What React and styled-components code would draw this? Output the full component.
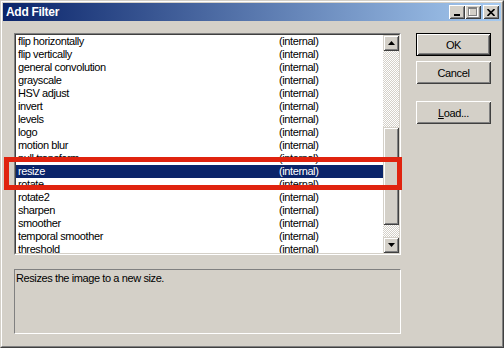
import React from 'react'
import styled, { createGlobalStyle } from 'styled-components'

const GlobalStyle = createGlobalStyle`
  html, body {
    margin: 0;
    padding: 0;
    background: #d4d0c8;
  }
  * {
    box-sizing: border-box;
  }
`

const face = '#d4d0c8'
const font = `"Liberation Sans", Arial, sans-serif`

const Frame = styled.div`
  position: relative;
  width: 504px;
  height: 348px;
  border: 1px solid;
  border-color: ${face} #404040 #404040 ${face};
  font-family: ${font};
`
const FrameInner = styled.div`
  height: 100%;
  border: 1px solid;
  border-color: #fff #808080 #808080 #fff;
  padding: 1px;
  background: ${face};
  display: flex;
  flex-direction: column;
`
const TitleBar = styled.div`
  height: 18px;
  display: flex;
  align-items: center;
  padding: 0 2px 0 3px;
  background: linear-gradient(to right, #0a246a, #a6caf0);
`
const Title = styled.div`
  flex: 1;
  color: #fff;
  font-weight: bold;
  font-size: 12px;
  letter-spacing: -0.3px;
`
const CaptionButton = styled.div`
  width: 16px;
  height: 14px;
  margin-left: ${(p) => p.$gap || 0}px;
  display: flex;
  align-items: center;
  justify-content: center;
  background: ${face};
  box-shadow: inset 1px 1px #fff, inset -1px -1px #404040,
    inset 2px 2px ${face}, inset -2px -2px #808080;
`
const Body = styled.div`
  flex: 1;
  display: flex;
  gap: 15px;
  padding: 12px 10px 11px 11px;
`
const LeftColumn = styled.div`
  width: 387px;
  display: flex;
  flex-direction: column;
  gap: 14px;
`
const SunkenOuter = styled.div`
  height: 222px;
  border: 1px solid;
  border-color: #808080 #fff #fff #808080;
`
const SunkenInner = styled.div`
  height: 100%;
  border: 1px solid;
  border-color: #404040 ${face} ${face} #404040;
  background: #fff;
  display: flex;
`
const Rows = styled.div`
  flex: 1;
  overflow: hidden;
`
const Row = styled.div`
  height: 13px;
  display: flex;
  align-items: center;
  font-size: 11px;
  letter-spacing: -0.4px;
  line-height: 13px;
  white-space: nowrap;
  color: ${(p) => (p.$selected ? '#fff' : '#000')};
  background: ${(p) => (p.$selected ? '#0a246a' : 'transparent')};
`
const NameCell = styled.span`
  width: 263px;
  padding-left: 2px;
`
const SourceCell = styled.span`
  flex: 1;
`
const Scrollbar = styled.div`
  width: 16px;
  display: flex;
  flex-direction: column;
`
const ArrowButton = styled.div`
  height: 16px;
  display: flex;
  align-items: center;
  justify-content: center;
  background: ${face};
  box-shadow: inset 1px 1px ${face}, inset -1px -1px #404040,
    inset 2px 2px #fff, inset -2px -2px #808080;
`
const Track = styled.div`
  flex: 1;
  background-color: #fff;
  background-image: repeating-conic-gradient(${face} 0 25%, #fff 0 50%);
  background-size: 2px 2px;
`
const Thumb = styled.div`
  margin-top: ${(p) => p.$offset}px;
  height: ${(p) => p.$size}px;
  background: ${face};
  box-shadow: inset 1px 1px ${face}, inset -1px -1px #404040,
    inset 2px 2px #fff, inset -2px -2px #808080;
`
const Description = styled.div`
  height: 65px;
  border: 1px solid;
  border-color: #808080 #fff #fff #808080;
  padding: 2px 1px;
  font-size: 11px;
  letter-spacing: -0.4px;
  color: #000;
`
const ButtonColumn = styled.div`
  width: 75px;
  display: flex;
  flex-direction: column;
`
const Button = styled.div`
  height: 23px;
  margin-top: ${(p) => p.$gap || 0}px;
  display: flex;
  align-items: center;
  justify-content: center;
  font-size: 11px;
  letter-spacing: -0.4px;
  color: #000;
  background: ${face};
  border: ${(p) => (p.$default ? '1px solid #000' : 'none')};
  box-shadow: inset 1px 1px #fff, inset -1px -1px #404040,
    inset 2px 2px ${face}, inset -2px -2px #808080;
`
const Mnemonic = styled.span`
  text-decoration: underline;
`
const Callout = styled.div`
  position: absolute;
  left: 3px;
  top: 156px;
  width: 398px;
  height: 33px;
  border: 5px solid #e0230f;
  pointer-events: none;
`

const filters = [
  'flip horizontally',
  'flip vertically',
  'general convolution',
  'grayscale',
  'HSV adjust',
  'invert',
  'levels',
  'logo',
  'motion blur',
  'null transform',
  'resize',
  'rotate',
  'rotate2',
  'sharpen',
  'smoother',
  'temporal smoother',
  'threshold',
]

const Arrow = ({ up }) => (
  <svg width="7" height="4" viewBox="0 0 7 4">
    <path d={up ? 'M3.5 0 L7 4 L0 4 Z' : 'M0 0 L7 0 L3.5 4 Z'} fill="#000" />
  </svg>
)

const App = () => {
  return (
    <>
      <GlobalStyle />
      <Frame>
        <FrameInner>
          <TitleBar>
            <Title>Add Filter</Title>
            <CaptionButton>
              <svg width="8" height="8" viewBox="0 0 8 8">
                <rect x="1" y="6" width="6" height="2" fill="#000" />
              </svg>
            </CaptionButton>
            <CaptionButton>
              <svg width="10" height="10" viewBox="0 0 10 10">
                <rect x="1.5" y="1.5" width="8" height="8" fill="none" stroke="#fff" />
                <rect x="0.5" y="0.5" width="8" height="8" fill="none" stroke="#808080" />
                <rect x="0" y="1" width="9" height="1" fill="#808080" />
              </svg>
            </CaptionButton>
            <CaptionButton $gap={2}>
              <svg width="8" height="7" viewBox="0 0 8 7">
                <path d="M0.5 0 L7.5 7 M7.5 0 L0.5 7" stroke="#000" strokeWidth="1.6" />
              </svg>
            </CaptionButton>
          </TitleBar>
          <Body>
            <LeftColumn>
              <SunkenOuter>
                <SunkenInner>
                  <Rows>
                    {filters.map((name) => (
                      <Row key={name} $selected={name === 'resize'}>
                        <NameCell>{name}</NameCell>
                        <SourceCell>(internal)</SourceCell>
                      </Row>
                    ))}
                  </Rows>
                  <Scrollbar>
                    <ArrowButton>
                      <Arrow up />
                    </ArrowButton>
                    <Track>
                      <Thumb $offset={76} $size={98} />
                    </Track>
                    <ArrowButton>
                      <Arrow />
                    </ArrowButton>
                  </Scrollbar>
                </SunkenInner>
              </SunkenOuter>
              <Description>Resizes the image to a new size.</Description>
            </LeftColumn>
            <ButtonColumn>
              <Button $default>OK</Button>
              <Button $gap={5}>Cancel</Button>
              <Button $gap={17}>
                <span>
                  <Mnemonic>L</Mnemonic>oad...
                </span>
              </Button>
            </ButtonColumn>
          </Body>
        </FrameInner>
        <Callout />
      </Frame>
    </>
  )
}

export default App
